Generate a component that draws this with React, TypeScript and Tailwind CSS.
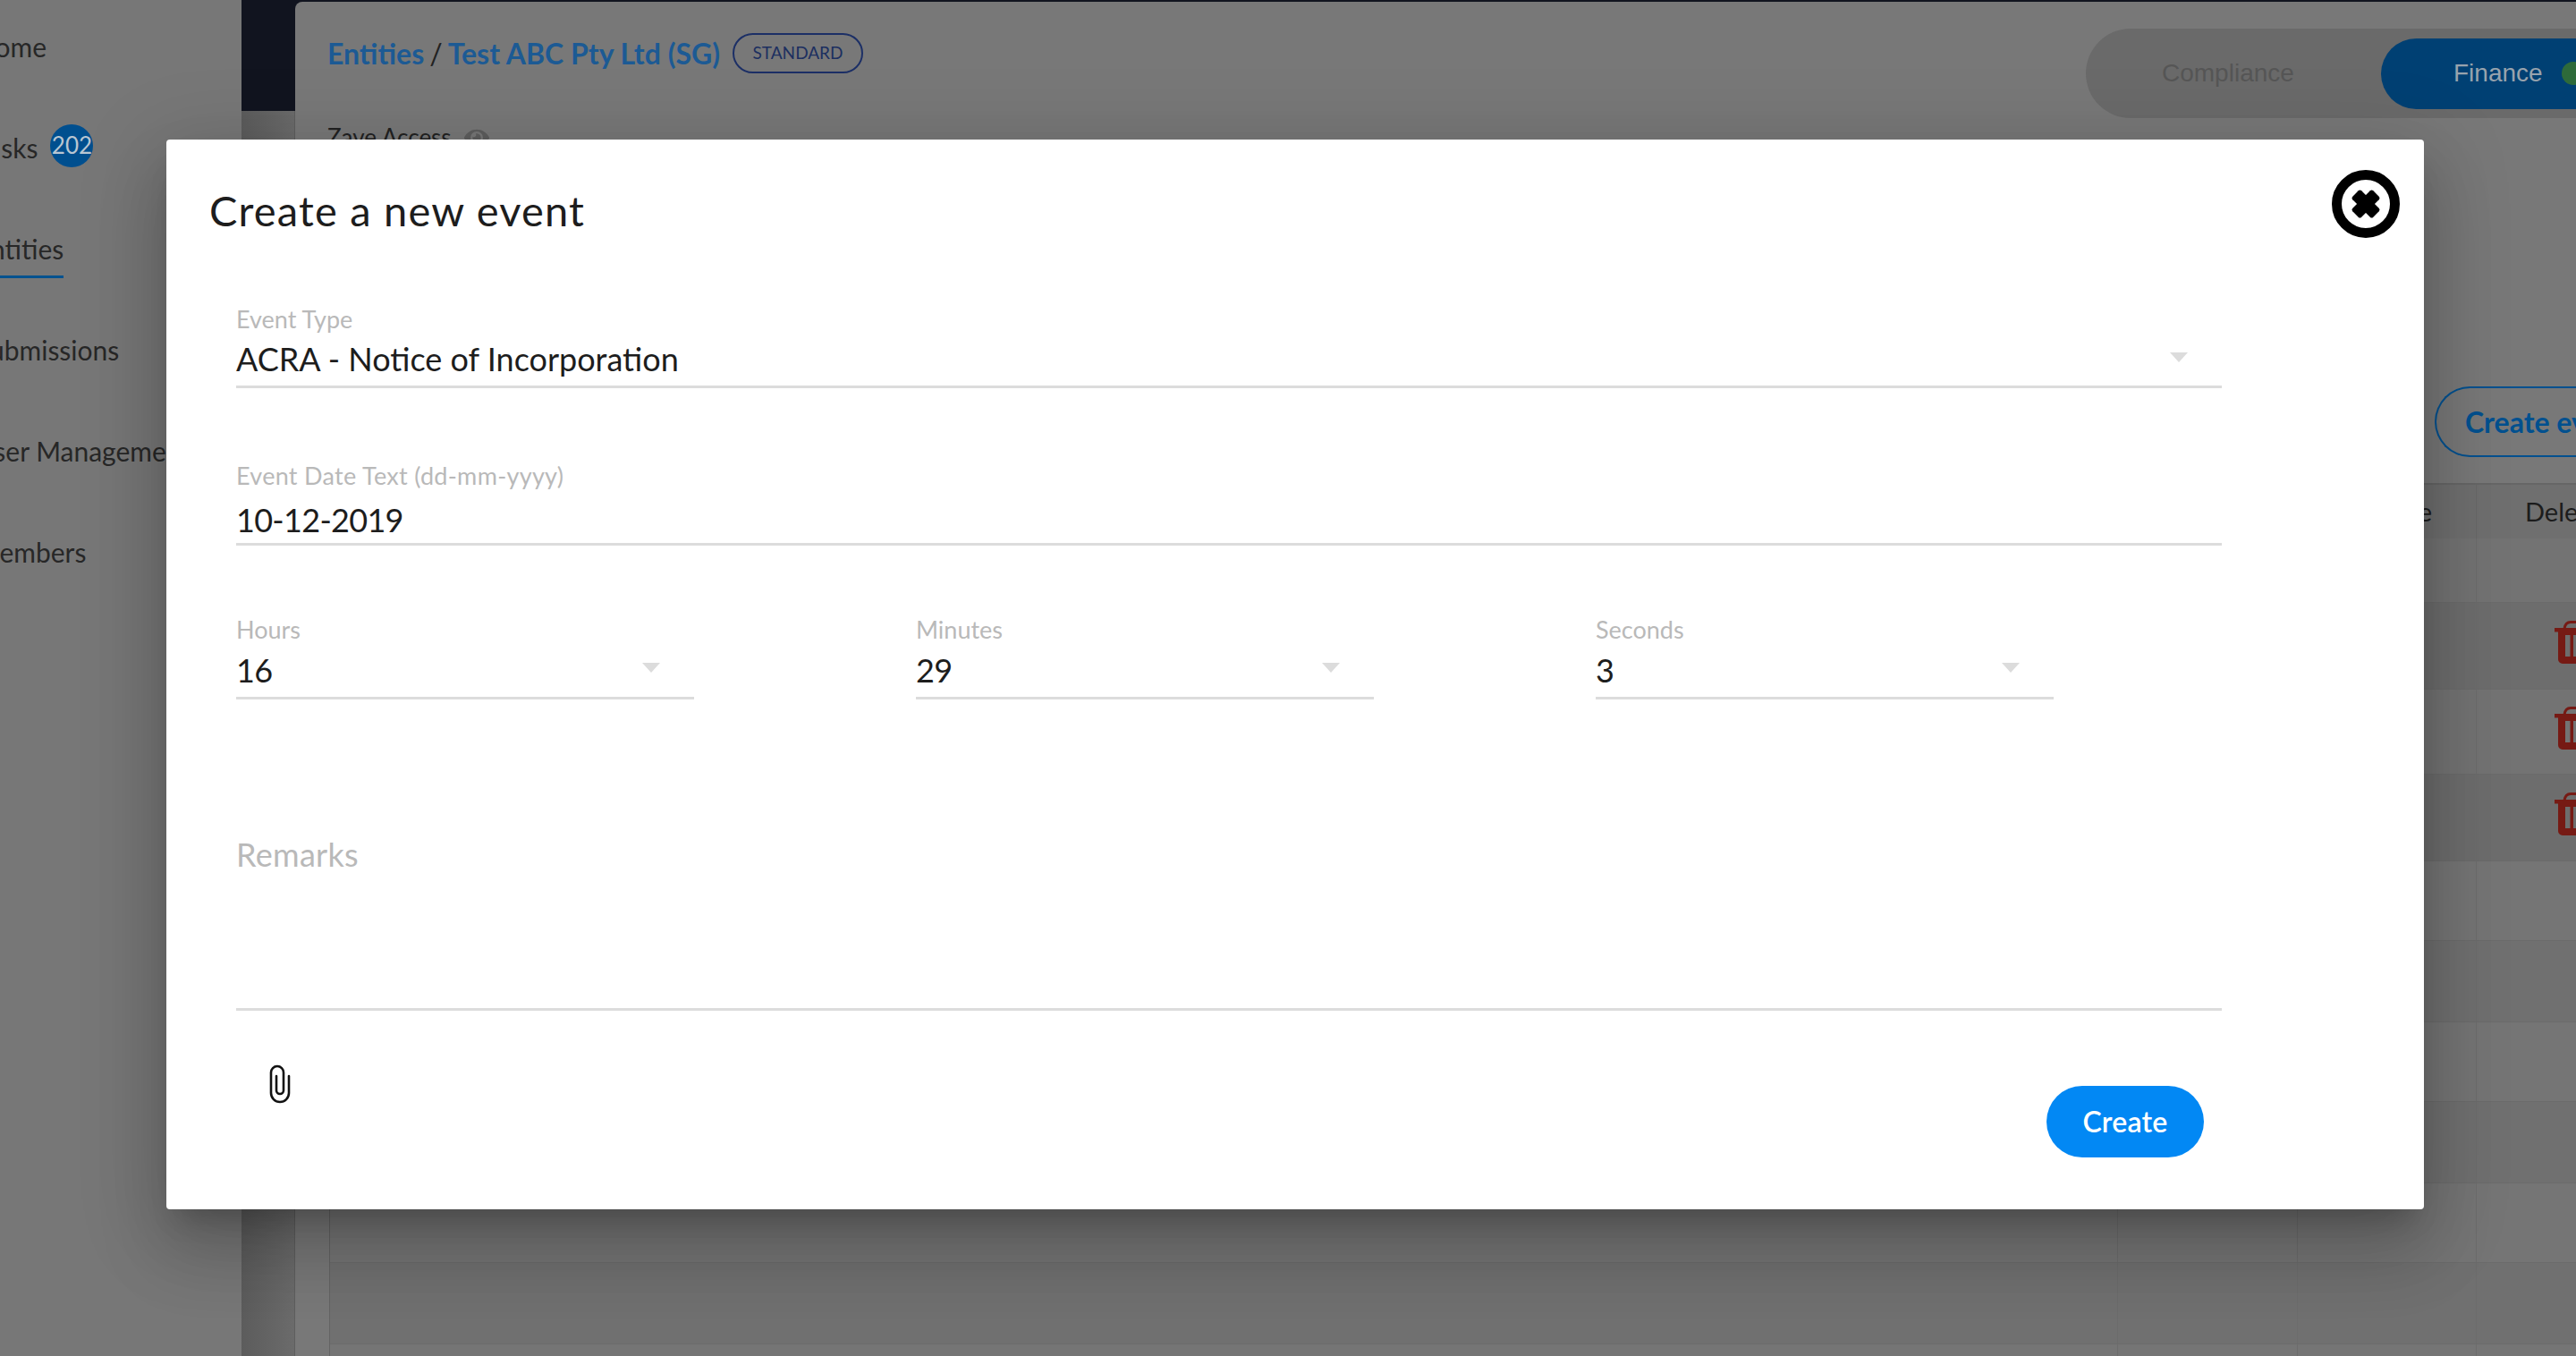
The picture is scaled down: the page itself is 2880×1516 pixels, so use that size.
import React from 'react';
import { FaEye } from 'react-icons/fa';

const rows = [
  { h: 'h-[72px]', bg: 'bg-[#737373]', trash: false },
  { h: 'h-[97px]', bg: 'bg-[#6d6d6d]', trash: true },
  { h: 'h-[95px]', bg: 'bg-[#737373]', trash: true },
  { h: 'h-[97px]', bg: 'bg-[#6d6d6d]', trash: true },
  { h: 'h-[89px]', bg: 'bg-[#757575]', trash: false },
  { h: 'h-[91px]', bg: 'bg-[#707070]', trash: false },
  { h: 'h-[89px]', bg: 'bg-[#757575]', trash: false },
  { h: 'h-[91px]', bg: 'bg-[#707070]', trash: false },
  { h: 'h-[89px]', bg: 'bg-[#757575]', trash: false },
  { h: 'h-[91px]', bg: 'bg-[#707070]', trash: false },
  { h: 'h-[60px]', bg: 'bg-[#757575]', trash: false },
];

const Arrow = ({ className = '' }: { className?: string }) => (
  <svg width="20" height="11" viewBox="0 0 20 11" className={`shrink-0 mr-[38px] ${className}`}>
    <path d="M0 0H20L10 11Z" fill="#dcdcdc" />
  </svg>
);

const SelectField = ({ label, value, width, valueClass = '', gap = 'mt-[5px]', arrowClass = 'mb-[4px]' }: any) => (
  <div className={`${width} border-b-[3px] border-[#dcdcdc] pb-[6px]`}>
    <div className="h-[32px] text-[27px] leading-[32px] text-[#b9b9b9]">{label}</div>
    <div className={`${gap} flex h-[48px] items-center justify-between text-[36px] leading-[48px] text-[#1d1d1d]`}>
      <span className={valueClass}>{value}</span>
      <Arrow className={arrowClass} />
    </div>
  </div>
);

const NavItem = ({ children }: any) => (
  <div className="flex h-[113px] items-center whitespace-nowrap">{children}</div>
);

const CloseIcon = () => (
  <svg width="76" height="76" viewBox="0 0 76 76">
    <circle cx="38" cy="38" r="32.5" fill="none" stroke="#000" strokeWidth="11" />
    <rect x="21.7" y="31" width="32.6" height="14" rx="2.5" transform="rotate(45 38 38)" />
    <rect x="21.7" y="31" width="32.6" height="14" rx="2.5" transform="rotate(-45 38 38)" />
  </svg>
);

const PaperclipIcon = () => (
  <svg width="24" height="44" viewBox="0 0 24 44" fill="none" stroke="#111" strokeWidth="2.6" strokeLinecap="round">
    <path d="M8 13V29a4 4 0 0 0 8 0V9a7 7 0 0 0-14 0V32a10 10 0 0 0 20 0V13" />
  </svg>
);

const TrashIcon = () => (
  <svg width="44" height="48" viewBox="0 0 44 48" className="shrink-0" fill="#761a14">
    <rect x="0" y="8" width="44" height="4.5" />
    <path d="M11 9Q12 1.5 18 1.5H26Q32 1.5 33 9" fill="none" stroke="#761a14" strokeWidth="3" />
    <path
      fillRule="evenodd"
      d="M4 12H40V43a5 5 0 0 1-5 5H9a5 5 0 0 1-5-5ZM12 16V40H17.5V16ZM21 16V40H26V16ZM29.5 16V40H32V16Z"
    />
  </svg>
);

export default function App() {
  return (
    <div className="relative flex h-[1516px] w-[2880px] overflow-hidden bg-[#777777] font-['Lato',sans-serif]">
      <aside className="w-[270px] shrink-0 overflow-hidden">
        <nav className="-mt-[4px] ml-[-28px] text-[30px] text-[#272727]">
          <NavItem>Home</NavItem>
          <NavItem>
            <span>Tasks</span>
            <span className="-mt-[6px] ml-[14px] flex h-[48px] w-[48px] items-center justify-center rounded-full bg-[#004f8f] text-[26px] text-[#b9c6d2]">
              202
            </span>
          </NavItem>
          <NavItem>
            <span className="border-b-[3px] border-[#00528f] pt-[14px] pb-[12px] leading-[36px]">Entities</span>
          </NavItem>
          <NavItem>Submissions</NavItem>
          <NavItem>User Management</NavItem>
          <NavItem>Members</NavItem>
        </nav>
      </aside>

      <div className="flex w-[60px] shrink-0 flex-col">
        <div className="h-[124px] bg-[#11141f]" />
        <div className="flex-1 border-r border-[#5e5e5e] bg-linear-to-r from-[#5c5c5c] to-[#6b6b6b]" />
      </div>

      <div className="min-w-0 flex-1 bg-[#11141f] pt-[2px]">
        <main className="h-full overflow-hidden rounded-tl-[8px] bg-[#787878]">
          <div className="flex h-[430px]">
            <div className="flex-1 pt-[35px] pl-[36px]">
              <div className="flex h-[45px] items-center text-[32px] text-[#1c5a94]">
                <span className="font-bold">Entities</span>
                <span className="mx-[6px] text-[#222222]">/</span>
                <span className="font-bold">Test ABC Pty Ltd (SG)</span>
                <span className="ml-[14px] flex h-[45px] w-[146px] items-center justify-center rounded-full border-2 border-[#1c2f66] text-[19px] text-[#1c2f60]">
                  STANDARD
                </span>
              </div>
              <div className="mt-[52px] flex items-center gap-[14px] text-[26px] text-[#222222]">
                Zave Access
                <FaEye className="text-[#5e5e5e]" size={28} />
              </div>
            </div>
            <div className="mt-[30px] flex h-[100px] w-[548px] shrink-0 items-center rounded-l-full bg-[#6a6a6a] font-['Liberation_Sans',sans-serif] text-[28px]">
              <span className="pl-[85px] text-[#565656]">Compliance</span>
              <div className="ml-auto flex h-[79px] w-[218px] items-center overflow-hidden rounded-l-full bg-[#004073] pl-[81px] text-[#98a3ad]">
                <span>Finance</span>
                <span className="ml-[21px] h-[26px] w-[26px] shrink-0 rounded-full bg-[#2e6a3a]" />
              </div>
            </div>
          </div>

          <div className="flex justify-end">
            <div className="flex h-[79px] w-[158px] items-center overflow-hidden rounded-l-full border-2 border-r-0 border-[#00508f] pl-[32px] text-[32px] font-bold whitespace-nowrap text-[#00508f]">
              Create event
            </div>
          </div>

          <div className="mt-[29px] ml-[38px] border-t-2 border-l border-[#666666] border-l-[#636363]">
            <div className="grid h-[60px] grid-cols-[1999px_201px_200px_1fr] items-center bg-[#6f6f6f] text-[29px] text-[#1c1c1c]">
              <div className="h-full border-r border-[#686868]" />
              <div className="h-full border-r border-[#686868]" />
              <div className="flex h-full items-center justify-end border-r border-[#686868] pr-[49px]">Update</div>
              <div className="pl-[54px] whitespace-nowrap">Delete</div>
            </div>
            {rows.map((row, i) => (
              <div key={i} className={`grid grid-cols-[1999px_201px_200px_1fr] border-b border-[#6b6b6b] ${row.h} ${row.bg}`}>
                <div className="border-r border-[#6c6c6c]" />
                <div className="border-r border-[#6c6c6c]" />
                <div className="border-r border-[#6c6c6c]" />
                <div className="flex items-center pb-[8px] pl-[87px]">{row.trash && <TrashIcon />}</div>
              </div>
            ))}
          </div>
        </main>
      </div>

      <div className="absolute top-[156px] left-[186px] h-[1196px] w-[2524px] rounded-[4px] bg-white pt-[48px] pl-[48px] shadow-[0_22px_30px_-14px_rgba(0,0,0,0.2),0_48px_76px_6px_rgba(0,0,0,0.14),0_18px_92px_16px_rgba(0,0,0,0.12)]">
        <h2 className="h-[62px] text-[47px] leading-[62px] tracking-[1.2px] text-[#1d1d1d]">Create a new event</h2>
        <button className="absolute top-[34px] right-[27px]">
          <CloseIcon />
        </button>

        <form className="mt-[75px] ml-[30px] w-[2220px]">
          <SelectField label="Event Type" value="ACRA - Notice of Incorporation" width="w-full" gap="mt-[4px]" />

          <div className="mt-[82px] w-full border-b-[3px] border-[#dcdcdc] pb-[2px]">
            <div className="h-[32px] text-[27px] leading-[32px] tracking-[0.3px] text-[#b9b9b9]">Event Date Text (dd-mm-yyyy)</div>
            <div className="mt-[9px] h-[48px] text-[36px] leading-[48px] tracking-[-0.7px] text-[#1d1d1d]">10-12-2019</div>
          </div>

          <div className="mt-[78px] flex gap-[248px]">
            <SelectField label="Hours" value="16" width="w-[512px]" valueClass="tracking-[-0.7px]" arrowClass="mb-[6px]" />
            <SelectField label="Minutes" value="29" width="w-[512px]" valueClass="tracking-[-0.7px]" arrowClass="mb-[6px]" />
            <SelectField label="Seconds" value="3" width="w-[512px]" valueClass="tracking-[-0.7px]" arrowClass="mb-[6px]" />
          </div>

          <div className="mt-[153px] h-[195px] w-full border-b-[3px] border-[#dcdcdc] text-[36px] leading-[40px] tracking-[0.3px] text-[#b9b9b9]">
            Remarks
          </div>

          <div className="flex items-start justify-between">
            <span className="mt-[60px] ml-[37px]">
              <PaperclipIcon />
            </span>
            <button
              type="button"
              className="mt-[84px] mr-[20px] h-[80px] w-[176px] rounded-full bg-[#0288f4] text-[32px] font-semibold tracking-[0.2px] text-white"
            >
              Create
            </button>
          </div>
        </form>
      </div>
    </div>
  );
}
